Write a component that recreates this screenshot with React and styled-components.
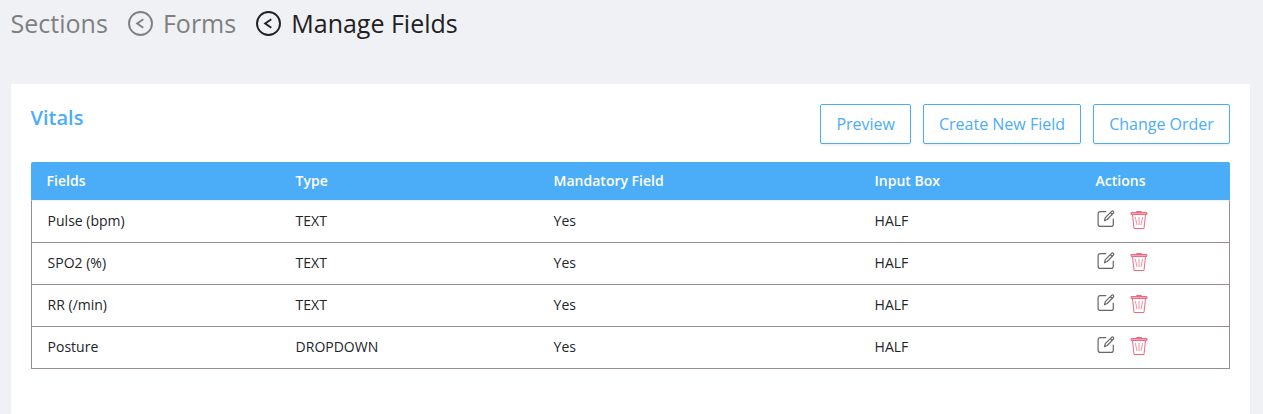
import React from 'react';
import styled, { createGlobalStyle } from 'styled-components';

const GlobalStyle = createGlobalStyle`
  * { box-sizing: border-box; }
  body {
    margin: 0;
    background: #eff1f5;
    font-family: 'Open Sans', 'Noto Sans', sans-serif;
    font-size: 14px;
    color: #212529;
    overflow: hidden;
  }
`;

const Page = styled.main`
  height: 414px;
  padding: 0 13px 0 11px;
  display: flex;
  flex-direction: column;
`;

const Breadcrumb = styled.nav`
  height: 84px;
  padding-top: 6px;
  display: flex;
  align-items: flex-start;
  gap: 20.1px;
  margin-left: -0.4px;
  font-size: 25px;
  line-height: 34px;
`;

const Crumb = styled.span`
  display: flex;
  align-items: center;
  color: ${(p) => (p.$active ? '#212121' : '#7f7f7f')};
  white-space: nowrap;

  svg { margin: 1px 10px 0 0; }
`;

const Panel = styled.section`
  flex: 1;
  padding: 20px 20px 0;
  background: #fff;
`;

const PanelHeader = styled.header`
  display: flex;
  justify-content: space-between;
  height: 58px;
`;

const Title = styled.h2`
  margin: 0 0 0 -0.5px;
  font-size: 20px;
  line-height: 27px;
  font-weight: 600;
  color: #4badf8;
`;

const Actions = styled.div`
  display: flex;
  gap: 12px;
`;

const Button = styled.button`
  height: 40px;
  width: ${(p) => p.$width}px;
  padding: 0;
  border: 1px solid #4badf8;
  border-radius: 2px;
  background: #fff;
  box-shadow: 0 2px 0 rgba(0, 0, 0, 0.045);
  color: #4badf8;
  font-family: inherit;
  font-size: 16px;
  line-height: 38px;
  white-space: nowrap;
`;

const Row = styled.div`
  display: grid;
  grid-template-columns: 248px 258px 321px 221px 1fr;
  align-items: center;
`;

const HeadRow = styled(Row)`
  height: 38px;
  grid-template-columns: 249px 258px 321px 221px 1fr;
  padding-left: 15.6px;
  border-radius: 2px 2px 0 0;
  background: #4badf8;
  color: #fff;
  font-weight: 600;
`;

const Body = styled.div`
  border: 1px solid #978c8f;
  border-top-color: #f0f0f0;
`;

const BodyRow = styled(Row)`
  height: 42px;
  padding: 0 0 2px 15.6px;
  border-bottom: 1px solid #978c8f;

  &:last-child {
    height: 41px;
    border-bottom: 0;
  }
`;

const Cell = styled.div`
  line-height: 22px;
`;

const IconCell = styled.div`
  display: flex;
  align-items: flex-start;
  height: 22px;
  gap: 15px;
  padding-left: 1.4px;
`;

const BackIcon = () => (
  <svg width="25" height="25" viewBox="0 0 25 25" fill="none" stroke="currentColor" strokeWidth="1.900">
    <circle cx="12.500" cy="12.500" r="11.500" />
    <path d="M15.300 8.300 9.200 12.500l6.100 4.200" />
  </svg>
);

const EditIcon = () => (
  <svg width="18" height="18" viewBox="-0.300 0 18 18" fill="none" stroke="#666" strokeWidth="1.200" strokeLinejoin="round" strokeLinecap="round">
    <path d="M8.500 1.600H3Q.8 1.600.8 3.800v10.400q0 2.200 2.200 2.200h10.800q2.200 0 2.200-2.200V9" />
    <path d="m7.200 10.700.8-3.100L14.300 1.300q.8-.8 1.700 0 .9.900.1 1.800L9.900 9.500zM13 2.600l1.900 1.900" />
  </svg>
);

const TrashIcon = () => (
  <svg width="18" height="20" viewBox="0 0 18 20" fill="none" stroke="#ee6b83" strokeWidth="1">
    <path fill="#f6a6b4" d="M1 2.500h16v2H1z" />
    <path d="M6.500 2.500v-1h5v1M2.500 4.500l1.500 14h10l1.500-14" />
    <path strokeOpacity=".75" d="M5.300 7l1.700 8M9 7v8M12.700 7l-1.700 8" />
  </svg>
);

const fields = [
  ['Pulse (bpm)', 'TEXT', 'Yes', 'HALF'],
  ['SPO2 (%)', 'TEXT', 'Yes', 'HALF'],
  ['RR (/min)', 'TEXT', 'Yes', 'HALF'],
  ['Posture', 'DROPDOWN', 'Yes', 'HALF'],
];

export default function App() {
  return (
    <>
      <GlobalStyle />
      <Page>
        <Breadcrumb>
          <Crumb>Sections</Crumb>
          <Crumb><BackIcon />Forms</Crumb>
          <Crumb $active><BackIcon />Manage Fields</Crumb>
        </Breadcrumb>
        <Panel>
          <PanelHeader>
            <Title>Vitals</Title>
            <Actions>
              <Button $width={90.6}>Preview</Button>
              <Button $width={158}>Create New Field</Button>
              <Button $width={137}>Change Order</Button>
            </Actions>
          </PanelHeader>
          <HeadRow>
            {['Fields', 'Type', 'Mandatory Field', 'Input Box', 'Actions'].map((h) => (
              <Cell key={h}>{h}</Cell>
            ))}
          </HeadRow>
          <Body>
            {fields.map((row) => (
              <BodyRow key={row[0]}>
                {row.map((value, i) => <Cell key={i}>{value}</Cell>)}
                <IconCell>
                  <EditIcon />
                  <TrashIcon />
                </IconCell>
              </BodyRow>
            ))}
          </Body>
        </Panel>
      </Page>
    </>
  );
}
